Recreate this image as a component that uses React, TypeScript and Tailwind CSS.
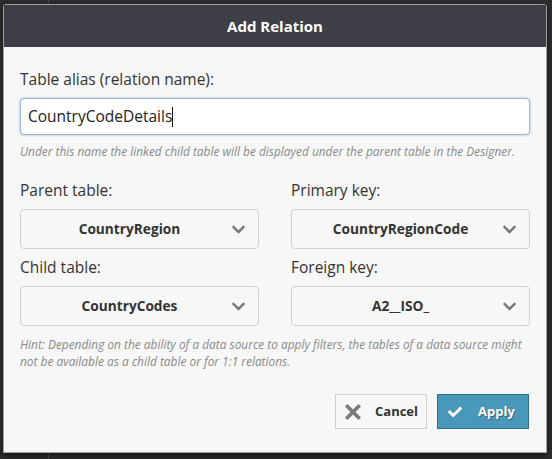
import { FaChevronDown, FaCheck } from 'react-icons/fa'

// ─── ICONS ────────────────────────────────────────────────

function CrossIcon() {
  return (
    <svg width="16" height="16" viewBox="0 0 16 16" className="shrink-0">
      <path d="M2.5 2.5 L13.5 13.5 M13.5 2.5 L2.5 13.5" stroke="#7a7a7a" strokeWidth="3.6" strokeLinecap="square" />
    </svg>
  )
}

// ─── SELECT BOX ───────────────────────────────────────────

function SelectBox({ label, value }: { label: string; value: string }) {
  return (
    <div className="flex flex-col">
      <span className="text-[15.5px] leading-[22px] text-[#333] mb-[8px]">{label}</span>
      <div className="h-[40px] flex items-center rounded-[4px] border border-[#cfcfcf] bg-[#f7f7f7] relative">
        <span className="flex-1 text-center text-[13.7px] font-bold text-[#333] pr-[20px]">{value}</span>
        <FaChevronDown className="absolute right-[12px] top-[12px] text-[#777] w-[15px] h-[15px]" />
      </div>
    </div>
  )
}

// ─── APP ──────────────────────────────────────────────────

export default function App() {
  return (
    <div
      className="w-[552px] h-[459px] bg-[#2e2e2f] relative overflow-hidden"
      style={{ fontFamily: '"Open Sans", "Noto Sans", sans-serif' }}
    >
      {/* background canvas lines */}
      <div className="absolute left-[48px] top-0 w-px h-full bg-[#4a4a4a]" />

      <div className="absolute left-[3px] top-[4px] w-[544px] h-[449px] border border-[#a0a0a0] rounded-t-[3px] bg-[#f7f7f7] flex flex-col shadow-[0_2px_6px_rgba(0,0,0,0.6)]">
        {/* Header */}
        <div className="h-[42px] bg-[#3d3e46] flex items-center justify-center shrink-0">
          <span className="text-white font-bold text-[15px]">Add Relation</span>
        </div>

        {/* Body */}
        <div className="px-[16px] pt-[21px] flex flex-col">
          <span className="text-[15.5px] leading-[22px] text-[#333]">Table alias (relation name):</span>
          <div className="mt-[8px] h-[37px] rounded-[4px] border border-[#9ab7cf] bg-white shadow-[0_0_3px_rgba(102,160,210,0.6)] flex items-center px-[7px]">
            <span className="text-[15.5px] text-[#222]">CountryCodeDetails</span>
            <span className="w-px h-[20px] bg-[#111]" />
          </div>
          <span className="mt-[9px] text-[11.9px] italic text-[#8a8a8a] leading-[14px]">
            Under this name the linked child table will be displayed under the parent table in the Designer.
          </span>

          <div className="mt-[21px] grid grid-cols-2 gap-x-[32px] gap-y-[7px]">
            <SelectBox label="Parent table:" value="CountryRegion" />
            <SelectBox label="Primary key:" value="CountryRegionCode" />
            <SelectBox label="Child table:" value="CountryCodes" />
            <SelectBox label="Foreign key:" value="A2__ISO_" />
          </div>

          <span className="mt-[10px] text-[11.9px] italic text-[#8a8a8a] leading-[17px]">
            Hint: Depending on the ability of a data source to apply filters, the tables of a data source might not be available as a child table or for 1:1 relations.
          </span>

          <div className="mt-[24px] flex justify-end gap-[10px] pr-[1px]">
            <button className="w-[92px] h-[35px] border border-[#cfcfcf] bg-[#f7f7f7] flex items-center pl-[9px] gap-[14px]">
              <CrossIcon />
              <span className="text-[13px] font-bold text-[#333]">Cancel</span>
            </button>
            <button className="w-[92px] h-[35px] border border-[#2f6f8b] bg-[#4a98b9] flex items-center pl-[10px] gap-[16px]">
              <FaCheck className="w-[14px] h-[14px] text-white" />
              <span className="text-[13px] font-bold text-white [text-shadow:1px_1px_0_rgba(0,0,0,0.35)]">Apply</span>
            </button>
          </div>
        </div>
      </div>
    </div>
  )
}
